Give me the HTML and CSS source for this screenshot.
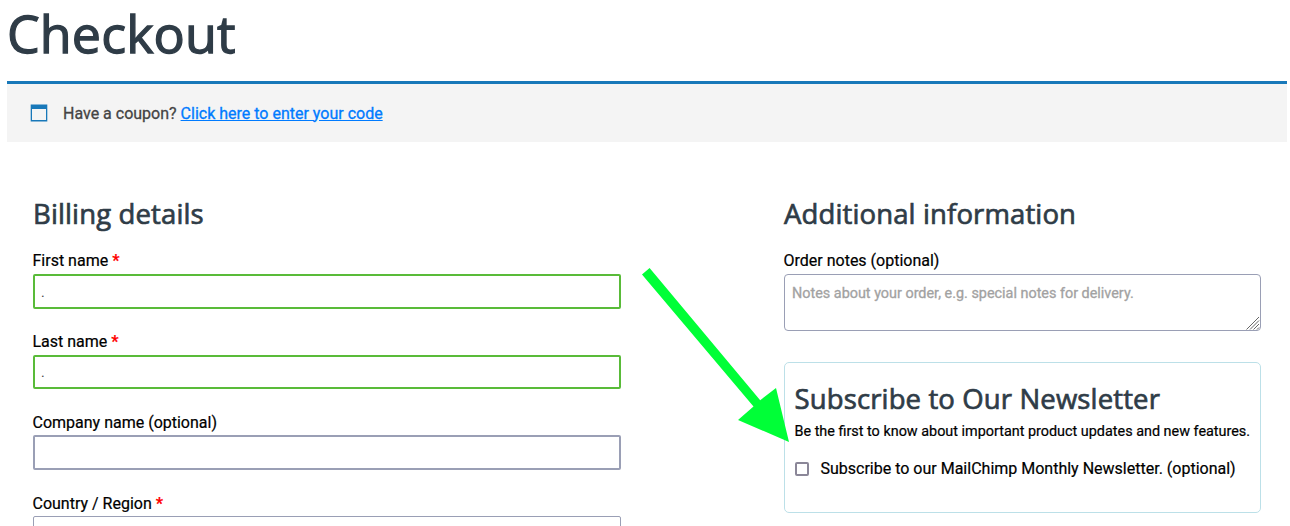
FILE: index.html
```html
<!DOCTYPE html>
<html lang="en">
<head>
<meta charset="utf-8">
<title>Checkout</title>
<link rel="stylesheet" href="styles.css">
</head>
<body>
<main class="page">
  <h1 class="page-title">Checkout</h1>
  <div class="notice">
    <svg class="notice-icon" width="18" height="18" viewBox="0 0 18 18"><path fill="#1878b9" fill-rule="evenodd" d="M.7 .4h16.6v17H.7zM2 5v11.1h14V5z"/></svg>
    <span class="notice-text">Have a coupon? <a class="notice-link" href="#">Click here to enter your code</a></span>
  </div>
  <form class="checkout">
    <section class="billing">
      <h2 class="heading">Billing details</h2>
      <div class="field"><label class="label" for="first">First name <b class="required">*</b></label><input class="input valid" id="first" value="."></div>
      <div class="field"><label class="label" for="last">Last name <b class="required">*</b></label><input class="input valid last" id="last" value="."></div>
      <div class="field"><label class="label" for="company">Company name (optional)</label><input class="input raised" id="company"></div>
      <div class="field"><label class="label" for="country">Country / Region <b class="required">*</b></label><input class="input select raised" id="country"></div>
    </section>
    <section class="additional">
      <h2 class="heading">Additional information</h2>
      <label class="label" for="notes">Order notes (optional)</label>
      <div class="notes-wrap">
        <textarea class="notes" id="notes" placeholder="Notes about your order, e.g. special notes for delivery."></textarea>
        <svg class="grip" width="14" height="14" viewBox="0 0 14 14"><path d="M.5 13.5L13 1M4 13.5L13 4.5M7.5 13.5L13 8M11 13.5l2-2" stroke="#666" stroke-width="1" fill="none"/></svg>
      </div>
      <div class="newsletter">
        <h2 class="heading newsletter-heading">Subscribe to Our Newsletter</h2>
        <p class="newsletter-text">Be the first to know about important product updates and new features.</p>
        <label class="optin"><input class="checkbox" type="checkbox"><span class="optin-text">Subscribe to our MailChimp Monthly Newsletter. (optional)</span></label>
      </div>
    </section>
  </form>
</main>
<svg class="arrow" width="150" height="176" viewBox="0 0 150 176"><path fill="#00ff37" d="M2 24.6L9.6 18 120.2 150.2 136 138 149 192 98 170 113.5 156.5z" transform="translate(0 -16)"/></svg>
</body>
</html>
```
FILE: styles.css
```css
body { margin: 0; background: #fff; color: #000; font-family: Roboto, sans-serif; font-size: 16px; }
.page { box-sizing: border-box; height: 526px; overflow: hidden; padding: 0 3px 0 7px; }
.page-title { margin: 0; height: 81px; font: 500 52px/65px "Open Sans", sans-serif; color: #2f3c47; -webkit-text-stroke: 1.3px; letter-spacing: 0.1px; }
.notice { display: flex; align-items: center; height: 58px; border-top: 3px solid #1878b9; padding: 0 23px; background: #f4f4f4; color: #444; -webkit-text-stroke: 0.3px; }
.notice-icon { margin-right: 15px; }
.notice-link { color: #007bff; text-decoration: underline; }
.checkout { display: grid; grid-template-columns: 588px 477px; column-gap: 163px; padding: 52px 26px 0; }
.heading { margin: 0 0 13px; font: 500 27.5px/40px "Open Sans", sans-serif; color: #2f3c47; -webkit-text-stroke: 0.7px; letter-spacing: 0.13px; }
.field { height: 81px; }
.label { display: block; line-height: 27px; margin-left: -0.5px; -webkit-text-stroke: 0.2px; }
.required { color: #f00; }
.input { display: block; box-sizing: border-box; width: 100%; height: 35px; border: 2px solid #9a9fb5; border-radius: 2px; padding: 1px 6px; font: 14px Roboto, sans-serif; color: #444; background: #fff; outline: none; }
.valid { border-color: #59bb39; }
.last { height: 34px; }
.raised { margin-top: -1px; }
.select { border-width: 1px; }
.notes-wrap { position: relative; height: 57px; }
.notes { display: block; box-sizing: border-box; width: 100%; height: 57px; resize: none; border: 1px solid #9a9fb5; border-radius: 4px; padding: 10px 7px; font: 14.4px/17px Roboto, sans-serif; -webkit-text-stroke: 0.3px; }
.notes::placeholder { color: #a2a2a2; }
.grip { position: absolute; right: 1px; bottom: 1px; }
.newsletter { box-sizing: border-box; height: 151px; margin-top: 31px; border: 1px solid #bce0e8; border-radius: 5px; padding: 16px 9.5px; }
.newsletter-heading { margin: 0; white-space: nowrap; }
.newsletter-text { margin: 0; font-size: 14.4px; line-height: 26px; white-space: nowrap; -webkit-text-stroke: 0.2px; }
.optin { display: flex; align-items: center; margin-top: 11px; height: 25px; white-space: nowrap; -webkit-text-stroke: 0.2px; }
.checkbox { appearance: none; box-sizing: border-box; width: 14px; height: 14px; margin: 1px 12px 0 0; border: 2px solid #8b8798; border-radius: 2px; }
.arrow { position: absolute; left: 640px; top: 266px; }
```
